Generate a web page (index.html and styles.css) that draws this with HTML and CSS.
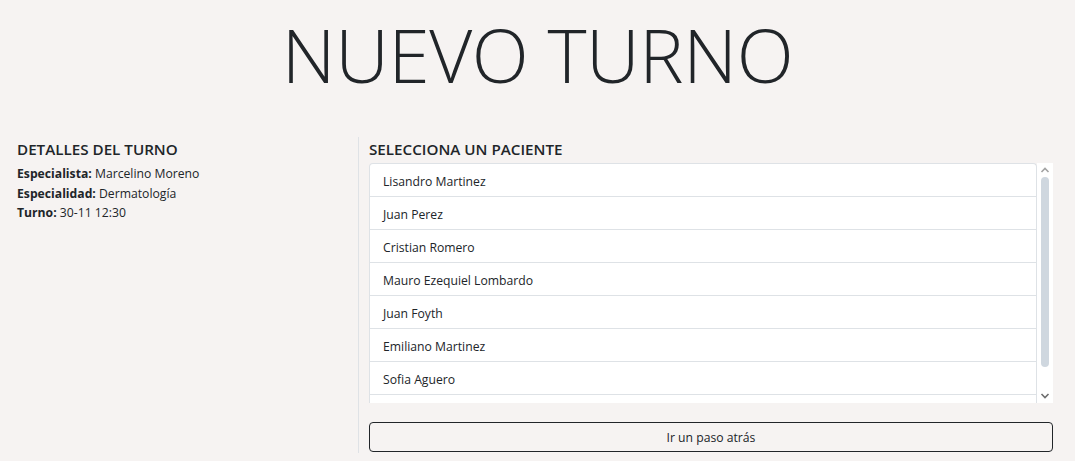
FILE: index.html
```html
<!DOCTYPE html>
<html lang="es">
<head>
<meta charset="utf-8">
<title>Nuevo turno</title>
<link rel="stylesheet" href="styles.css">
</head>
<body>
<h1 class="title">NUEVO TURNO</h1>
<main class="layout">
  <section class="details">
    <h2 class="section-title">DETALLES DEL TURNO</h2>
    <p class="detail"><strong>Especialista:</strong> Marcelino Moreno</p>
    <p class="detail"><strong>Especialidad:</strong> Dermatología</p>
    <p class="detail"><strong>Turno:</strong> 30-11 12:30</p>
  </section>
  <section class="patients">
    <h2 class="section-title">SELECCIONA UN PACIENTE</h2>
    <div class="scroller">
      <ul class="patient-list">
        <li class="patient">Lisandro Martinez</li>
        <li class="patient">Juan Perez</li>
        <li class="patient">Cristian Romero</li>
        <li class="patient">Mauro Ezequiel Lombardo</li>
        <li class="patient">Juan Foyth</li>
        <li class="patient">Emiliano Martinez</li>
        <li class="patient">Sofia Aguero</li>
        <li class="patient patient-more" aria-hidden="true"></li>
      </ul>
      <div class="scrollbar">
        <svg class="arrow" width="16" height="14" viewBox="0 0 16 14"><path d="M4.5 9 L8 5.5 L11.5 9" fill="none" stroke="#a3a3a3" stroke-width="1.6"/></svg>
        <div class="track"><div class="thumb"></div></div>
        <svg class="arrow" width="16" height="14" viewBox="0 0 16 14"><path d="M4.5 5 L8 8.5 L11.5 5" fill="none" stroke="#6e6e6e" stroke-width="1.6"/></svg>
      </div>
    </div>
    <button class="back-btn" type="button">Ir un paso atrás</button>
  </section>
</main>
</body>
</html>
```

FILE: styles.css
```css
* { box-sizing: border-box; }

body {
  margin: 0;
  background: #f6f3f2;
  color: #212529;
  font-family: "Open Sans", "Noto Sans", sans-serif;
}

.title {
  margin: 0;
  padding-top: 10px;
  height: 137px;
  text-align: center;
  font-weight: 300;
  font-size: 74.5px;
  line-height: 89px;
  letter-spacing: -0.35px;
}

.layout {
  display: flex;
  padding: 0 22px 8px 17px;
}

.details {
  width: 341px;
  flex: none;
}

.section-title {
  margin: 0;
  padding-top: 2px;
  font-size: 15.2px;
  line-height: 20px;
  font-weight: 600;
  letter-spacing: 0;
}

.details .section-title {
  margin-bottom: 5px;
}

.detail {
  margin: 0;
  font-size: 12.2px;
  line-height: 19.5px;
}

.detail strong { font-weight: 700; }

.patients {
  flex: 1;
  border-left: 1px solid #dfe2e6;
  padding-left: 10px;
  padding-bottom: 1px;
}

.patients .section-title {
  margin-bottom: 4px;
}

.scroller {
  display: flex;
  height: 240px;
  overflow: hidden;
}

.patient-list {
  flex: 1;
  margin: 0;
  padding: 0;
  list-style: none;
  background: #fff;
  border: 1px solid #dee2e6;
  border-bottom: none;
  border-radius: 4px 4px 0 0;
  align-self: flex-start;
}

.patient {
  padding: 8px 13px 4px;
  font-size: 12.2px;
  line-height: 20px;
  border-bottom: 1px solid #dee2e6;
}

.patient-more {
  height: 33px;
}

.scrollbar {
  width: 16px;
  flex: none;
  background: #fff;
  display: flex;
  flex-direction: column;
  align-items: center;
}

.arrow {
  flex: none;
  display: block;
}

.track {
  flex: 1;
  width: 100%;
  display: flex;
  justify-content: center;
  padding-bottom: 22px;
}

.thumb {
  width: 8px;
  height: 100%;
  background: #cfd7df;
  border-radius: 4px;
}

.back-btn {
  display: block;
  width: 100%;
  margin-top: 19px;
  height: 30px;
  background: transparent;
  border: 1px solid #212529;
  border-radius: 4px;
  color: #212529;
  font-family: inherit;
  font-size: 12.2px;
}
```
